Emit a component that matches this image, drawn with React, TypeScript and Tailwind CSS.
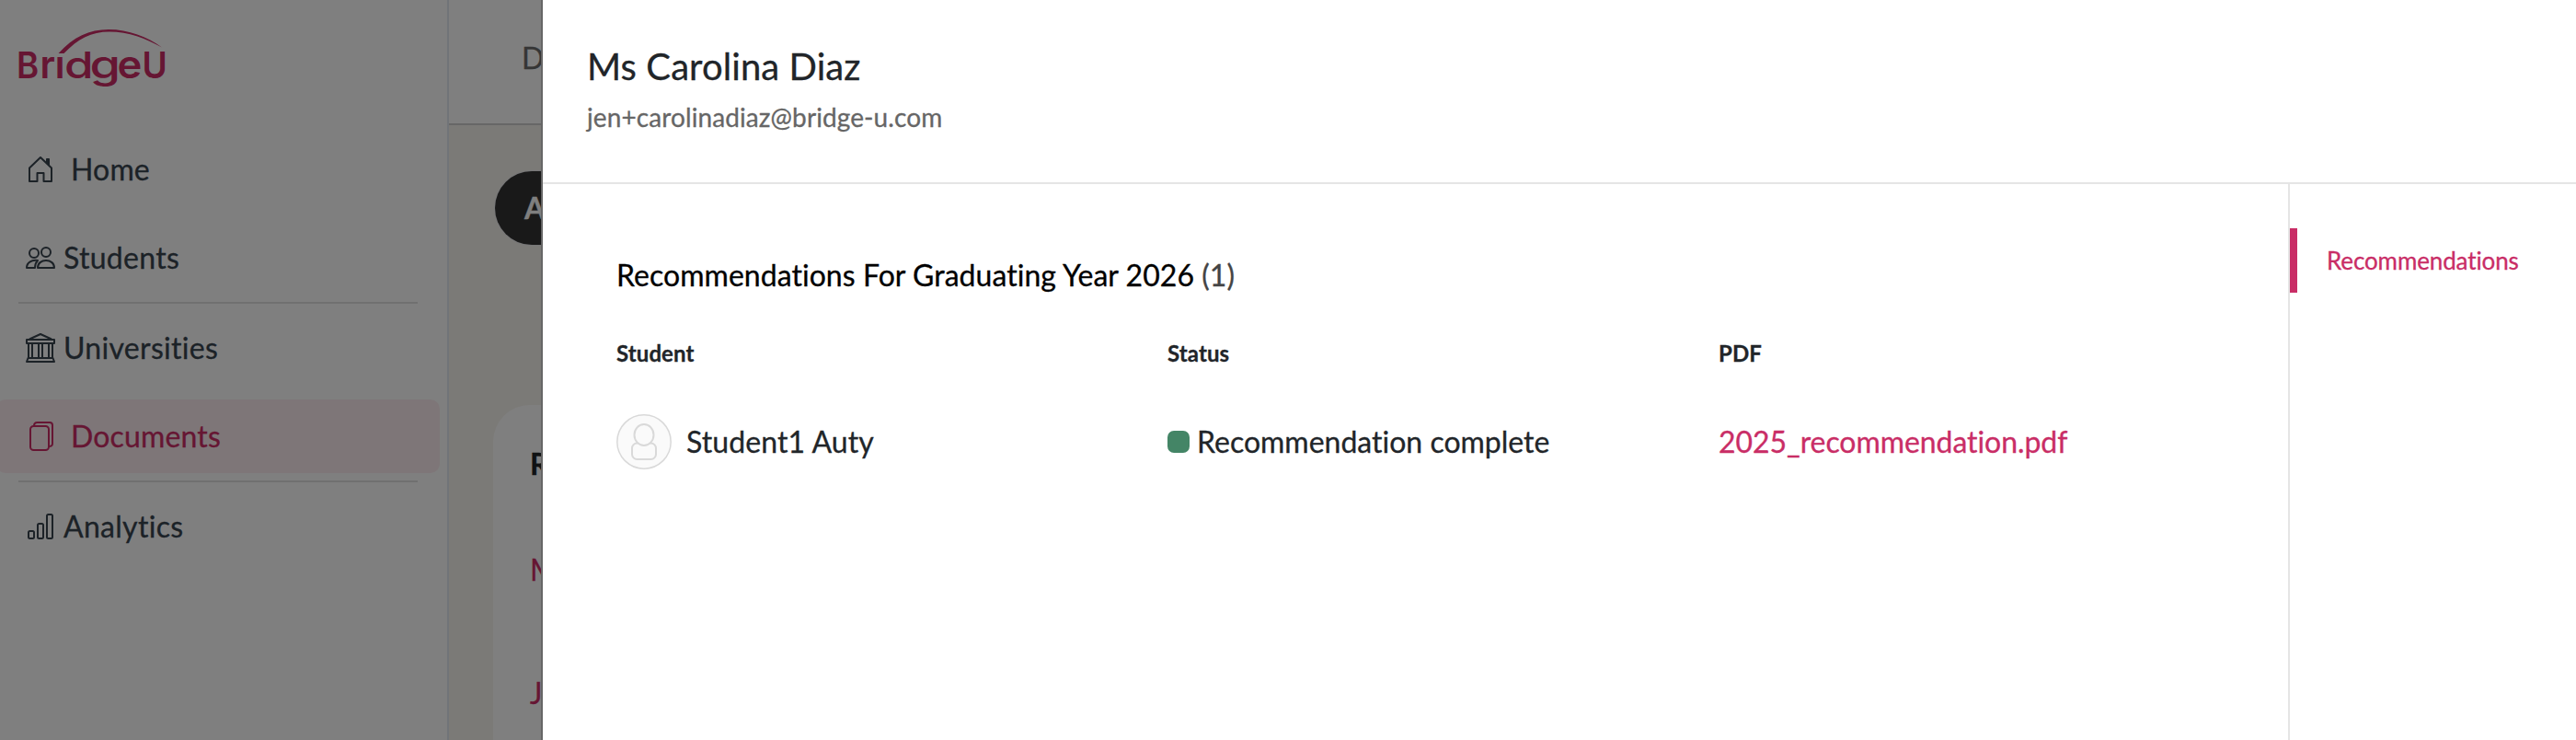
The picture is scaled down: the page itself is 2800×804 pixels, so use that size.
import type { ReactNode } from "react";

const iconProps = {
  width: 32,
  height: 32,
  viewBox: "0 0 32 32",
  fill: "none",
  stroke: "currentColor",
  strokeWidth: 2,
  className: "shrink-0",
} as const;

function HomeIcon() {
  return (
    <svg {...iconProps}>
      <path d="M4 29V14.5L16 3l12 11.5V29H19.5V20h-7v9z" strokeLinejoin="round" />
      <path d="M22.5 4.500h3v7l-3-3z" fill="currentColor" strokeWidth={1} />
    </svg>
  );
}

function StudentsIcon() {
  return (
    <svg {...iconProps}>
      <circle cx="9" cy="11" r="5" />
      <circle cx="22" cy="10" r="5" />
      <path d="M13 19C6 18 1 21.500 1 27h9c0-3.500 1-6 3-8z" strokeLinejoin="round" />
      <path d="M13 27c0-5 4-8 9-8s9 3 9 8z" strokeLinejoin="round" />
    </svg>
  );
}

function UniversitiesIcon() {
  return (
    <svg {...iconProps}>
      <path d="M4 6.500 16 1l12 5.500" strokeLinejoin="round" />
      <path d="M1 7h30v4H1zM2.500 27h27L31 31H1z" strokeLinejoin="round" />
      <path d="M3 11v16M7 11v16M14 11v16M18 11v16M25 11v16M29 11v16" />
    </svg>
  );
}

function DocumentsIcon() {
  return (
    <svg {...iconProps}>
      <rect x="5" y="5" width="20" height="26" rx="3.500" />
      <path d="M9 4.500C9 2.500 10.500 1 12.500 1H26a3 3 0 0 1 3 3v20c0 2-1.500 3-4 3" />
    </svg>
  );
}

function AnalyticsIcon() {
  return (
    <svg {...iconProps}>
      <rect x="3" y="21" width="6" height="8" rx="1.500" />
      <rect x="13" y="13" width="6" height="16" rx="1.500" />
      <rect x="23" y="3" width="6" height="26" rx="1.500" />
    </svg>
  );
}

function Logo() {
  return (
    <svg width="200" height="112" viewBox="0 0 200 112" className="block fill-[#cc2c66] [-webkit-text-stroke:0]" fontFamily="Inter, sans-serif">
      <clipPath id="stem">
        <rect x="60" y="61.500" width="12" height="30" />
      </clipPath>
      <path d="M63.500 58C80 40 97 32 118 32c22 0 42 8 58 19.500C158 41.500 140 34.500 119 34.500 99 34.500 85 42 69.500 58z" />
      <text fontSize="39" fontWeight="600" transform="translate(18 84.500) scale(.94 1)">B</text>
      <text fontSize="41" fontWeight="600" transform="translate(43.600 84.500)">r</text>
      <g clipPath="url(#stem)">
        <text fontSize="41" fontWeight="600" transform="translate(59.700 84.500)">i</text>
      </g>
      <text fontSize="40" fontWeight="500" transform="translate(69.900 84.500) scale(1.28 1)">d</text>
      <text fontSize="42" fontWeight="500" transform="translate(97.600 84.500) scale(1.29 1)">g</text>
      <text fontSize="42" fontWeight="600" transform="translate(127.500 84.500) scale(1.080 1)">e</text>
      <text fontSize="39" fontWeight="600" transform="translate(154.600 84.500) scale(.95 1)">U</text>
    </svg>
  );
}

type NavItemProps = { icon: ReactNode; label: string; wide?: boolean; active?: boolean };

function NavItem({ icon, label, wide = false, active = false }: NavItemProps) {
  return (
    <a
      className={`-ml-1 mr-2 flex h-20 items-center rounded-[10px] pl-8 text-[32px] leading-[38px] ${
        wide ? "gap-[17px] tracking-[0.15px]" : "gap-[9px] tracking-[0.3px]"
      } ${active ? "bg-[#fdedf1] text-[#cc2c66]" : "text-[#38444f]"}`}
    >
      {icon}
      <span>{label}</span>
    </a>
  );
}

function Divider() {
  return <div className="mt-2 mb-2 ml-5 mr-8 h-0.5 bg-[#e0e0e0]" />;
}

function Sidebar() {
  return (
    <aside className="flex w-[488px] shrink-0 flex-col border-r-2 border-[#e2e8f0] bg-white">
      <Logo />
      <nav className="mt-8 flex flex-col">
        <NavItem icon={<HomeIcon />} label="Home" wide />
        <div className="h-4" />
        <NavItem icon={<StudentsIcon />} label="Students" />
        <Divider />
        <NavItem icon={<UniversitiesIcon />} label="Universities" />
        <div className="h-4" />
        <NavItem icon={<DocumentsIcon />} label="Documents" wide active />
        <Divider />
        <NavItem icon={<AnalyticsIcon />} label="Analytics" />
      </nav>
    </aside>
  );
}

function Page() {
  return (
    <main className="flex grow flex-col bg-[#f7f4ee]">
      <header className="flex h-[136px] items-start border-b-2 border-[#cfcfcf] bg-white pt-11 pl-[79px] text-[32px] leading-[38px] text-[#6b6b6b]">
        Documents
      </header>
      <div className="mt-[50px] ml-[50px] flex h-20 w-60 items-center rounded-full bg-[#333] pl-8 text-[32px] font-bold text-white ring-1 ring-[#eeeef0]">
        All teachers
      </div>
      <section className="mt-[174px] ml-12 flex grow flex-col rounded-tl-[40px] bg-white pl-10 text-[32px] leading-[38px]">
        <h2 className="mt-[45px] font-bold text-[#212529]">Recommender</h2>
        <a className="mt-[77px] text-[#cc2c66]">Ms Carolina Diaz</a>
        <a className="mt-24 text-[#cc2c66]">Jen Teacher</a>
      </section>
    </main>
  );
}

function Avatar() {
  return (
    <svg width="60" height="60" viewBox="0 0 60 60" className="shrink-0">
      <circle cx="30" cy="30" r="29.200" fill="#fafafa" stroke="#d9d9d9" strokeWidth="1.500" />
      <rect x="17" y="31.500" width="26" height="17.500" rx="5.500" fill="#fafafa" stroke="#d9d9d9" strokeWidth="2" />
      <ellipse cx="30" cy="22.500" rx="10.500" ry="11.500" fill="#fafafa" stroke="#d9d9d9" strokeWidth="2" />
    </svg>
  );
}

function Drawer() {
  return (
    <div className="absolute inset-y-0 right-0 flex w-[2212px] flex-col border-l-2 border-[#666] bg-white text-[#212529]">
      <header className="h-[200px] border-b-2 border-[#e5e5e5] pt-12 pl-12">
        <h1 className="text-[40px] leading-12 tracking-[0.08px]">Ms Carolina Diaz</h1>
        <p className="mt-3.5 text-[28px] leading-[34px] tracking-[0.1px] text-[#666]">jen+carolinadiaz@bridge-u.com</p>
      </header>
      <div className="flex grow">
        <section className="grow pt-20 pl-20">
          <h2 className="text-[32px] leading-[38px] tracking-[0.04px] text-black">
            Recommendations For Graduating Year 2026 <span className="text-[#444]">(1)</span>
          </h2>
          <div className="mt-[51px] grid grid-cols-[599px_599px_1fr] text-2xl leading-[29px] font-bold tracking-[0.1px]">
            <div>Student</div>
            <div>Status</div>
            <div>PDF</div>
          </div>
          <div className="mt-[52px] grid grid-cols-[599px_599px_1fr] items-center text-[32px] leading-[38px]">
            <div className="flex items-center gap-4">
              <Avatar />
              <span className="tracking-[0.1px]">Student1 Auty</span>
            </div>
            <div className="flex items-center gap-2">
              <span className="size-6 rounded-[7px] bg-[#448566]" />
              <span>Recommendation complete</span>
            </div>
            <a className="tracking-[-0.06px] text-[#c92d66]">2025_recommendation.pdf</a>
          </div>
        </section>
        <aside className="w-[313px] border-l-2 border-[#e5e5e5] pt-12">
          <a className="flex h-[70px] items-center border-l-8 border-[#c92d66] pl-8 text-[26px] tracking-[-0.12px] text-[#c92d66]">
            Recommendations
          </a>
        </aside>
      </div>
    </div>
  );
}

export default function App() {
  return (
    <div className="relative flex h-[804px] w-[2800px] overflow-hidden font-[Lato,sans-serif] [font-variant-ligatures:none] [-webkit-text-stroke:0.3px]">
      <Sidebar />
      <Page />
      <div className="absolute inset-0 bg-black/50" />
      <Drawer />
    </div>
  );
}
